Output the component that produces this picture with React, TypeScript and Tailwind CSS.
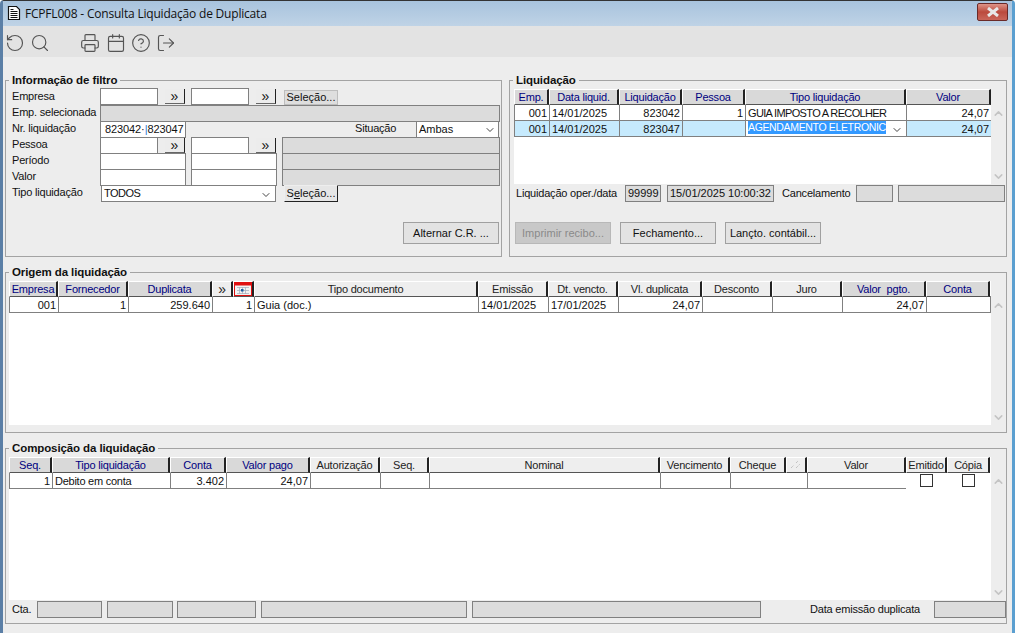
import { ChevronDown, ChevronUp, CircleHelp, LogOut, Printer, RotateCcw, Search, Calendar } from "lucide-react";
import type { ReactNode } from "react";

type Cell = { t?: ReactNode; r?: boolean; span?: boolean; cls?: string };
type Head = { t: ReactNode; blue?: boolean };

const font = "font-['Liberation_Sans',Arial,sans-serif]";

function Label({ children, className = "" }: { children: ReactNode; className?: string }) {
  return <div className={`text-[11px] leading-[14px] tracking-[-0.2px] text-[#111] whitespace-nowrap ${className}`}>{children}</div>;
}

function Input({ className = "", children }: { className?: string; children?: ReactNode }) {
  return <div className={`h-[17px] shrink-0 border border-[#808080] bg-white text-[11px] leading-[15px] text-[#111] ${className}`}>{children}</div>;
}

function Gray({ className = "", children }: { className?: string; children?: ReactNode }) {
  return <div className={`h-[17px] shrink-0 border border-[#808080] bg-[#dcdcdc] text-[11px] leading-[15px] text-[#111] whitespace-nowrap overflow-hidden ${className}`}>{children}</div>;
}

function Arrow({ className = "" }: { className?: string }) {
  return (
    <div className={`w-[20px] h-[15px] mt-px shrink-0 bg-[#ececec] border-r border-b border-r-[#222] border-b-[#666] flex items-center justify-center text-[14px] leading-[12px] text-[#111] ${className}`}>»</div>
  );
}

function Btn({ children, className = "", disabled = false }: { children: ReactNode; className?: string; disabled?: boolean }) {
  return (
    <div className={`flex items-center justify-center shrink-0 text-[11px] whitespace-nowrap border ${disabled ? "bg-[#c8c8c8] border-[#b8b8b8] text-[#8a8a8a]" : "bg-[#e3e3e3] border-[#a0a0a0] text-[#111]"} ${className}`}>{children}</div>
  );
}

function Fieldset({ title, className = "", children }: { title: string; className?: string; children: ReactNode }) {
  return (
    <div className={`relative shrink-0 border border-[#a3a3a3] ${className}`}>
      <div className="absolute left-[3px] -top-[8px] bg-[#ededed] px-[3px] text-[11.5px] leading-[14px] tracking-[-0.1px] font-bold text-[#111] whitespace-nowrap">{title}</div>
      {children}
    </div>
  );
}

function HeaderRow({ heads, grid }: { heads: Head[]; grid: string }) {
  return (
    <div className={`relative z-10 grid h-[16px] ${grid}`}>
      {heads.map((h, i) => (
        <div key={i} className={`h-[16px] flex items-center justify-center border-r-2 border-r-[#222] border-t border-l border-t-white border-l-white border-b border-b-[#555] text-[11px] leading-[14px] tracking-[-0.2px] whitespace-nowrap overflow-hidden ${h.blue ? "bg-[#d9d9d9] text-[#000080]" : "bg-[#eeeeee] text-[#222]"}`}>{h.t}</div>
      ))}
    </div>
  );
}

function DataRow({ cells, grid }: { cells: Cell[]; grid: string }) {
  return (
    <div className={`grid h-[17px] -mt-px ${grid}`}>
      {cells.map((c, i) => (
        <div key={i} className={`h-[17px] border border-[#808080] -mr-px bg-white pt-px text-[11px] leading-[14px] text-[#111] whitespace-nowrap overflow-hidden ${c.r ? "text-right pr-[2px]" : "pl-[2px]"} ${c.span ? "col-span-2" : ""} ${c.cls ?? ""}`}>{c.t}</div>
      ))}
    </div>
  );
}

function Scroll() {
  return (
    <div className="w-[14px] flex flex-col justify-between items-center shrink-0 pt-[18px] pb-[1px] bg-[#ededed]">
      <ChevronUp size={13} strokeWidth={2.8} className="text-[#c4c4c4]" />
      <ChevronDown size={13} strokeWidth={2.8} className="text-[#c4c4c4]" />
    </div>
  );
}

function CalHead() {
  return (
    <svg width="18" height="14" viewBox="0 0 18 14">
      <rect x="0.5" y="0.5" width="17" height="13" fill="#f2f2f2" stroke="#e01010" />
      <rect x="1" y="1" width="16" height="2.5" fill="#e01010" />
      <path d="M3 5.5h12M3 8.5h12M3 11.5h12M5.5 5v7M8.5 5v7M11.5 5v7" stroke="#aab2c0" strokeWidth="0.8" />
      <rect x="7" y="7" width="2.5" height="2.5" fill="#1f5fa0" />
    </svg>
  );
}

function Dots() {
  return (
    <svg width="12" height="10" viewBox="0 0 12 10">
      <path d="M1 8l3-3M6 8l4-4M6 3l2-2" stroke="#b0b0b0" strokeDasharray="1 1" fill="none" />
    </svg>
  );
}

const liqGrid = "grid-cols-[35px_70px_63px_63px_161px_85px]";
const oriGrid = "grid-cols-[49px_70px_84px_21px_21px_224px_70px_70px_84px_70px_70px_84px_64px]";
const comGrid = "grid-cols-[43px_118px_56px_84px_70px_49px_231px_70px_56px_21px_99px_41px_43px]";

function Check() {
  return (
    <div className="h-[17px] -mt-px flex items-start justify-center pt-[2px] bg-white">
      <div className="w-[13px] h-[13px] border border-[#333] bg-white" />
    </div>
  );
}

export default function App() {
  return (
    <div className={`${font} relative w-[1015px] h-[633px] overflow-hidden bg-[#ededed] flex flex-col border-l-[3px] border-r-[3px] border-t border-l-[#5b7fa6] border-r-[#5b9fd0] border-t-[#333] rounded-t-[4px]`}>
      {/* Title bar */}
      <div className="h-[25px] shrink-0 flex items-center bg-gradient-to-b from-[#a8c3dd] to-[#bfd3e6]">
        <div className="w-[22px] flex justify-center -mt-[2px]">
          <svg width="14" height="16" viewBox="0 0 14 16">
            <path d="M1.5 1.5h8l3 3v10h-11z" fill="#fff" stroke="#111" strokeWidth="1.2" />
            <path d="M3.5 4.5h3M3.5 6.5h7M3.5 8.5h7M3.5 10.5h7M3.5 12.5h7" stroke="#111" strokeWidth="1.2" />
          </svg>
        </div>
        <div className="text-[12px] leading-[16px] text-[#111] font-['Open_Sans',sans-serif] tracking-[-0.2px]">FCPFL008 - Consulta Liquidação de Duplicata</div>
        <div className="ml-auto mr-[4px] -mt-[3px] w-[31px] h-[18px] rounded-[2px] border border-[#6a2a28] bg-gradient-to-b from-[#dd9488] via-[#bb4a3d] to-[#c9665a] flex items-center justify-center">
          <svg width="14" height="10" viewBox="0 0 14 10">
            <path d="M2 1l10 8M12 1l-10 8" stroke="#e8e8e8" strokeWidth="3" />
          </svg>
        </div>
      </div>

      {/* Toolbar */}
      <div className="h-[31px] shrink-0 bg-[#e3e3e3] flex items-center pl-[2px] pt-[2px] text-[#555]">
        <RotateCcw size={20} strokeWidth={1.4} />
        <Search size={20} strokeWidth={1.4} className="ml-[5px]" />
        <Printer size={20} strokeWidth={1.4} className="ml-[30px]" />
        <Calendar size={20} strokeWidth={1.4} className="ml-[6px]" />
        <CircleHelp size={20} strokeWidth={1.4} className="ml-[5px]" />
        <LogOut size={20} strokeWidth={1.4} className="ml-[5px]" />
      </div>

      {/* Content */}
      <div className="flex flex-col pl-[2px] pt-[23px]">
        <div className="flex gap-[7px]">
          {/* Filter */}
          <Fieldset title="Informação de filtro" className="w-[497px] h-[177px]">
            <div className="flex flex-col pt-[7px]">
              <div className="flex h-[17px]">
                <Label className="w-[94px] pl-[6px] pt-px">Empresa</Label>
                <Input className="w-[58px]" />
                <Arrow className="ml-[7px]" />
                <Input className="ml-[6px] w-[58px]" />
                <Arrow className="ml-[7px]" />
                <Btn className="ml-[8px] mt-[2px] w-[54px] h-[15px] !border-[#bdbdbd] !bg-[#dedede]">Seleção...</Btn>
              </div>
              <div className="flex h-[16px]">
                <Label className="w-[94px] pl-[6px]">Emp. selecionada</Label>
                <Gray className="w-[400px]" />
              </div>
              <div className="flex h-[16px]">
                <Label className="w-[94px] pl-[6px]">Nr. liquidação</Label>
                <Input className="w-[86px] pl-[4px] tracking-[-0.1px]">823042·<span className="text-[#2b7bd6]">|</span>823047</Input>
                <Label className="ml-[169px] w-[61px]">Situação</Label>
                <Input className="w-[83px] pl-[2px] flex justify-between">
                  <span>Ambas</span>
                  <ChevronDown size={12} className="text-[#444] mt-[2px] mr-[2px]" />
                </Input>
              </div>
              <div className="flex h-[16px]">
                <Label className="w-[94px] pl-[6px]">Pessoa</Label>
                <Input className="w-[58px]" />
                <Arrow className="ml-[7px]" />
                <Input className="ml-[6px] w-[58px]" />
                <Arrow className="ml-[7px]" />
                <Gray className="ml-[6px] w-[218px]" />
              </div>
              <div className="flex h-[16px]">
                <Label className="w-[94px] pl-[6px]">Período</Label>
                <Input className="w-[86px]" />
                <Input className="ml-[5px] w-[86px]" />
                <Gray className="ml-[5px] w-[218px]" />
              </div>
              <div className="flex h-[16px]">
                <Label className="w-[94px] pl-[6px]">Valor</Label>
                <Input className="w-[86px]" />
                <Input className="ml-[5px] w-[86px]" />
                <Gray className="ml-[5px] w-[218px]" />
              </div>
              <div className="flex h-[17px]">
                <Label className="w-[95px] pl-[6px]">Tipo liquidação</Label>
                <Input className="w-[175px] pl-[2px] flex justify-between">
                  <span className="tracking-[-0.5px]">TODOS</span>
                  <ChevronDown size={12} className="text-[#444] mt-[3px] mr-[3px]" />
                </Input>
                <Btn className="ml-[8px] w-[54px] h-[17px] !border-t-[#eee] !border-l-[#eee] !border-r-[#222] !border-b-[#222] !bg-[#e6e6e6]">
                  <span>S<span className="underline">e</span>leção...</span>
                </Btn>
              </div>
              <div className="flex justify-end pr-[2px] mt-[20px]">
                <Btn className="w-[96px] h-[22px]">Alternar C.R. ...</Btn>
              </div>
            </div>
          </Fieldset>

          {/* Liquidação */}
          <Fieldset title="Liquidação" className="w-[498px] h-[177px]">
            <div className="flex flex-col pt-[8px] pl-[4px]">
              <div className="flex">
                <div className="w-[477px] h-[95px] bg-white">
                  <HeaderRow
                    grid={liqGrid}
                    heads={[
                      { t: "Emp.", blue: true },
                      { t: "Data liquid.", blue: true },
                      { t: "Liquidação", blue: true },
                      { t: "Pessoa", blue: true },
                      { t: "Tipo liquidação", blue: true },
                      { t: "Valor", blue: true },
                    ]}
                  />
                  <DataRow
                    grid={liqGrid}
                    cells={[
                      { t: "001", r: true },
                      { t: "14/01/2025" },
                      { t: "823042", r: true },
                      { t: "1", r: true },
                      { t: "GUIA IMPOSTO A RECOLHER", cls: "text-[10.5px] tracking-[-0.65px]" },
                      { t: "24,07", r: true },
                    ]}
                  />
                  <div className={`grid h-[17px] -mt-px ${liqGrid}`}>
                    {["001", "14/01/2025", "823047", "", "", "24,07"].map((t, i) => (
                      <div key={i} className={`h-[17px] border border-[#808080] -mr-px pt-px text-[11px] leading-[14px] text-[#111] whitespace-nowrap ${i === 1 ? "pl-[2px]" : "text-right pr-[2px]"} ${i === 4 ? "bg-white !text-left !pl-[2px] !pr-0 !pt-0 flex items-start justify-between" : "bg-[#c6eafd]"}`}>
                        {i === 4 ? (
                          <>
                            <span className="bg-[#3399ff] text-white text-[10.5px] tracking-[-0.35px] leading-[13px] h-[13px] w-[138px]">AGENDAMENTO ELETRONIC</span>
                            <ChevronDown size={12} className="text-[#444] mt-[3px] mr-[3px]" />
                          </>
                        ) : t}
                      </div>
                    ))}
                  </div>
                </div>
                <Scroll />
              </div>
              <div className="flex items-center h-[18px]">
                <Label className="ml-[2px] w-[109px]">Liquidação oper./data</Label>
                <Gray className="w-[36px] pl-[2px]">99999</Gray>
                <Gray className="ml-[6px] w-[107px] pl-[2px]">15/01/2025 10:00:32</Gray>
                <Label className="ml-[8px] w-[74px]">Cancelamento</Label>
                <Gray className="w-[37px]" />
                <Gray className="ml-[5px] w-[107px]" />
              </div>
              <div className="flex mt-[20px] gap-[9px] pl-[1px]">
                <Btn disabled className="w-[96px] h-[22px]">Imprimir recibo...</Btn>
                <Btn className="w-[96px] h-[22px]">Fechamento...</Btn>
                <Btn className="w-[96px] h-[22px]">Lançto. contábil...</Btn>
              </div>
            </div>
          </Fieldset>
        </div>

        {/* Origem */}
        <Fieldset title="Origem da liquidação" className="mt-[15px] w-[1002px] h-[161px]">
          <div className="flex pl-[3px] pt-[8px]">
            <div className="w-[982px] h-[144px] bg-white">
              <HeaderRow
                grid={oriGrid}
                heads={[
                  { t: "Empresa", blue: true },
                  { t: "Fornecedor", blue: true },
                  { t: "Duplicata", blue: true },
                  { t: <span className="text-[14px] leading-[12px]">»</span> },
                  { t: <CalHead /> },
                  { t: "Tipo documento" },
                  { t: "Emissão" },
                  { t: "Dt. vencto." },
                  { t: "Vl. duplicata" },
                  { t: "Desconto" },
                  { t: "Juro" },
                  { t: "Valor\u00a0\u00a0pgto.", blue: true },
                  { t: "Conta", blue: true },
                ]}
              />
              <DataRow
                grid={oriGrid}
                cells={[
                  { t: "001", r: true },
                  { t: "1", r: true },
                  { t: "259.640", r: true },
                  { t: "1", r: true, span: true },
                  { t: "Guia (doc.)" },
                  { t: "14/01/2025" },
                  { t: "17/01/2025" },
                  { t: "24,07", r: true },
                  { t: "" },
                  { t: "" },
                  { t: "24,07", r: true },
                  { t: "" },
                ]}
              />
            </div>
            <Scroll />
          </div>
        </Fieldset>

        {/* Composição */}
        <Fieldset title="Composição da liquidação" className="mt-[15px] w-[1002px] h-[176px]">
          <div className="flex pl-[3px] pt-[8px]">
            <div className="w-[982px] h-[143px] bg-white">
              <HeaderRow
                grid={comGrid}
                heads={[
                  { t: "Seq.", blue: true },
                  { t: "Tipo liquidação", blue: true },
                  { t: "Conta", blue: true },
                  { t: "Valor pago", blue: true },
                  { t: "Autorização" },
                  { t: "Seq." },
                  { t: "Nominal" },
                  { t: "Vencimento" },
                  { t: "Cheque" },
                  { t: <Dots /> },
                  { t: "Valor" },
                  { t: "Emitido" },
                  { t: "Cópia" },
                ]}
              />
              <div className={`grid ${comGrid}`}>
                <div className="col-span-11">
                  <DataRow
                    grid="grid-cols-[43px_118px_56px_84px_70px_49px_231px_70px_56px_21px_99px]"
                    cells={[
                      { t: "1", r: true },
                      { t: "Debito em conta", cls: "tracking-[-0.25px]" },
                      { t: "3.402", r: true },
                      { t: "24,07", r: true },
                      { t: "" },
                      { t: "" },
                      { t: "" },
                      { t: "" },
                      { t: "", span: true },
                      { t: "" },
                    ]}
                  />
                </div>
                <Check />
                <Check />
              </div>
            </div>
            <Scroll />
          </div>
          <div className="flex items-center h-[18px] pl-[6px]">
            <Label className="w-[25px]">Cta.</Label>
            <Gray className="w-[65px]" />
            <Gray className="ml-[5px] w-[66px]" />
            <Gray className="ml-[4px] w-[79px]" />
            <Gray className="ml-[5px] w-[206px]" />
            <Gray className="ml-[5px] w-[289px]" />
            <Label className="ml-[49px] w-[124px]">Data emissão duplicata</Label>
            <Gray className="w-[72px]" />
          </div>
        </Fieldset>
      </div>
    </div>
  );
}
